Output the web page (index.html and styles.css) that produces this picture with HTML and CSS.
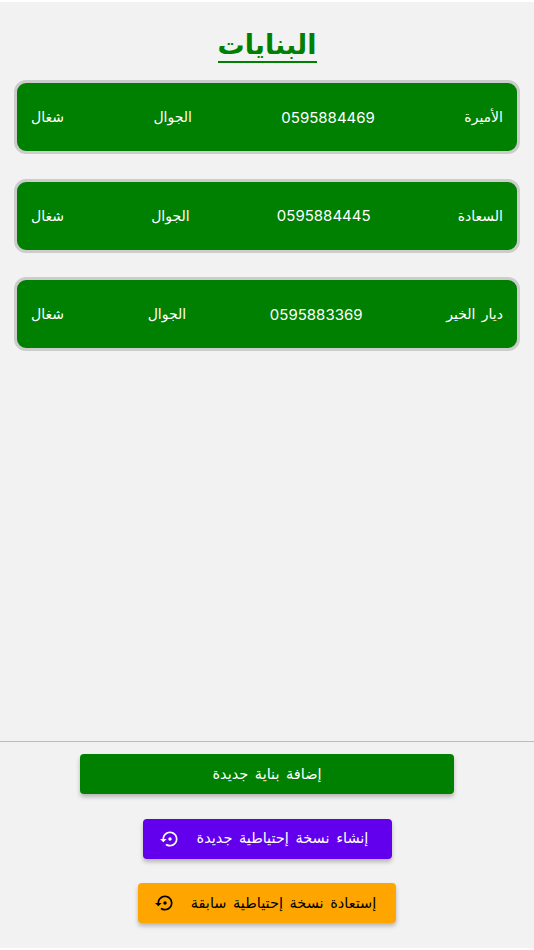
FILE: index.html
```html
<!DOCTYPE html>
<html lang="ar" dir="rtl">
  <head>
    <meta charset="UTF-8" />
    <meta name="viewport" content="width=device-width, initial-scale=1.0" />
    <link rel="stylesheet" href="styles.css">
    <title>البنايات</title>
  </head>
  <body>
    <div class="page">
      <main class="content">
        <h1 class="title">البنايات</h1>

        <div class="buildingCard">
          <span>الأميرة</span>
          <span class="phone">0595884469</span>
          <span>الجوال</span>
          <span>شغال</span>
        </div>
        <div class="buildingCard">
          <span>السعادة</span>
          <span class="phone">0595884445</span>
          <span>الجوال</span>
          <span>شغال</span>
        </div>
        <div class="buildingCard">
          <span>ديار الخير</span>
          <span class="phone">0595883369</span>
          <span>الجوال</span>
          <span>شغال</span>
        </div>
      </main>

      <footer class="actions">
        <button type="button" class="btn greenBtn">إضافة بناية جديدة</button>
        <button type="button" class="btn purpleBtn">
          إنشاء نسخة إحتياطية جديدة
          <svg class="btnIcon" viewBox="0 0 24 24"><path d="M14 12c0-1.1-.9-2-2-2s-2 .9-2 2 .9 2 2 2 2-.9 2-2zm-2-9c-4.97 0-9 4.03-9 9H0l4 4 4-4H5c0-3.87 3.13-7 7-7s7 3.13 7 7-3.13 7-7 7c-1.51 0-2.91-.49-4.06-1.3l-1.42 1.44C8.04 20.3 9.94 21 12 21c4.97 0 9-4.03 9-9s-4.03-9-9-9z"/></svg>
        </button>
        <button type="button" class="btn orangeBtn">
          إستعادة نسخة إحتياطية سابقة
          <svg class="btnIcon" viewBox="0 0 24 24"><path d="M14 12c0-1.1-.9-2-2-2s-2 .9-2 2 .9 2 2 2 2-.9 2-2zm-2-9c-4.97 0-9 4.03-9 9H0l4 4 4-4H5c0-3.87 3.13-7 7-7s7 3.13 7 7-3.13 7-7 7c-1.51 0-2.91-.49-4.06-1.3l-1.42 1.44C8.04 20.3 9.94 21 12 21c4.97 0 9-4.03 9-9s-4.03-9-9-9z"/></svg>
        </button>
      </footer>
    </div>
  </body>
</html>
```

FILE: styles.css
```css
body {
  margin: 0;
  background-color: #fff;
  font-family: Roboto, "DejaVu Sans", sans-serif;
}

.page {
  display: flex;
  flex-direction: column;
  height: 946px;
  margin: 2px 0;
  background-color: #f2f2f2;
}

.content {
  flex: 1;
  padding: 0 14px;
}

.title {
  width: fit-content;
  margin: 28px auto 17px;
  color: #008000;
  font-size: 27px;
  line-height: 31px;
  font-weight: bold;
  border-bottom: 2px solid #008000;
}

.buildingCard {
  display: flex;
  justify-content: space-between;
  align-items: center;
  height: 68px;
  margin-bottom: 24.5px;
  padding: 0 14px;
  color: #fff;
  font-size: 14px;
  word-spacing: 3px;
  background-color: #008000;
  border-style: solid;
  border-color: #ccc;
  border-width: 3px 3.5px;
  border-radius: 12px;
}

.phone {
  font-family: Inter, sans-serif;
  font-size: 15px;
}

.actions {
  display: flex;
  flex-direction: column;
  align-items: center;
  gap: 24.5px;
  height: 207px;
  padding-top: 12px;
  box-sizing: border-box;
  border-top: 1px solid #bbb;
}

.btn {
  display: flex;
  justify-content: center;
  align-items: center;
  gap: 17px;
  height: 40px;
  border: none;
  border-radius: 4px;
  font-family: inherit;
  font-size: 14.5px;
  word-spacing: 3px;
  white-space: nowrap;
  box-shadow: 0 3px 4px rgba(0, 0, 0, 0.25);
}

.greenBtn {
  width: 374px;
  color: #fff;
  background-color: #008000;
}

.purpleBtn {
  width: 249px;
  padding: 0 22px 0 16px;
  color: #fff;
  background-color: #6200ee;
}

.orangeBtn {
  width: 258px;
  padding: 0 19px 0 16px;
  gap: 16px;
  color: #000;
  background-color: #ffa500;
}

.btnIcon {
  width: 20px;
  height: 20px;
  fill: currentColor;
}
```
